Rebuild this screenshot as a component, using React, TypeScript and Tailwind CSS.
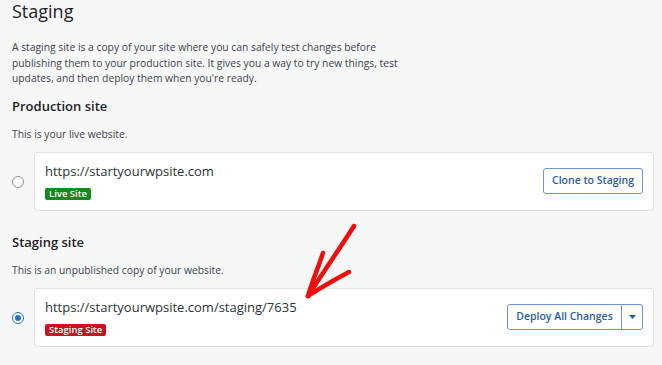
import React from 'react';

export default function App() {
    return (
        <div className="relative w-[662px] h-[365px] overflow-hidden bg-[#f6f7f7] text-[#2c3338]" style={{ fontFamily: '"Open Sans", sans-serif' }}>
            <div className="pl-3 pr-2">
                <h1 className="text-[18px] leading-[22px] text-[#1d2327]">Staging</h1>

                <p className="mt-[18px] w-[400px] text-[10.3px] leading-[15.5px] text-[#3c434a]">
                    A staging site is a copy of your site where you can safely test changes before publishing them to your production site. It gives you a way to try new things, test updates, and then deploy them when you're ready.
                </p>

                {/* Production */}
                <h2 className="mt-[10px] text-[13px] leading-[18px] font-semibold text-[#1d2327]">Production site</h2>
                <p className="mt-[11px] text-[10.3px] leading-[16px] text-[#3c434a]">This is your live website.</p>

                <div className="mt-[10px] flex items-center">
                    <span className="mt-[2px] w-[12px] h-[12px] rounded-full border border-[#8c8f94] bg-white shrink-0" />
                    <div className="ml-[10px] w-[620px] h-[59px] bg-white border border-[#e2e2e2] rounded-[3px] flex items-center justify-between pl-[10px] pr-[10px]">
                        <div>
                            <div className="text-[13px] leading-[17px] text-[#2c3338]">https://startyourwpsite.com</div>
                            <span className="mt-[8px] block w-fit bg-[#138a1e] text-white text-[9.5px] leading-[12px] font-semibold px-[4px] rounded-[2px]">Live Site</span>
                        </div>
                        <button className="h-[26px] w-[100px] border border-[#6f95cc] rounded-[3px] bg-white text-[10.5px] font-semibold text-[#2a5ea8]">Clone to Staging</button>
                    </div>
                </div>

                {/* Staging */}
                <h2 className="mt-[22px] text-[13px] leading-[18px] font-semibold text-[#1d2327]">Staging site</h2>
                <p className="mt-[11px] text-[10.3px] leading-[16px] text-[#3c434a]">This is an unpublished copy of your website.</p>

                <div className="mt-[10px] flex items-center">
                    <span className="mt-[2px] w-[12px] h-[12px] rounded-full border border-[#2a6fc9] bg-white shrink-0 flex items-center justify-center">
                        <span className="w-[6px] h-[6px] rounded-full bg-[#2a6fc9]" />
                    </span>
                    <div className="ml-[10px] w-[620px] h-[59px] bg-white border border-[#e2e2e2] rounded-[3px] flex items-center justify-between pl-[10px] pr-[10px]">
                        <div>
                            <div className="text-[13px] leading-[17px] text-[#2c3338]">https://startyourwpsite.com/staging/7635</div>
                            <span className="mt-[8px] block w-fit bg-[#cc1020] text-white text-[9.5px] leading-[12px] font-semibold px-[4px] rounded-[2px]">Staging Site</span>
                        </div>
                        <div className="flex h-[26px] border border-[#6f95cc] rounded-[3px] bg-white">
                            <button className="w-[114px] text-[10.5px] font-semibold text-[#2a5ea8] border-r border-[#6f95cc]">Deploy All Changes</button>
                            <button className="w-[20px] flex items-center justify-center">
                                <svg width="7" height="4" viewBox="0 0 7 4"><path d="M0 0h7L3.5 4z" fill="#2a5ea8" /></svg>
                            </button>
                        </div>
                    </div>
                </div>
            </div>

            {/* hand-drawn arrow */}
            <svg className="absolute left-0 top-0 pointer-events-none" width="662" height="365" viewBox="0 0 662 365">
                <g fill="none" stroke="#f20d0d" strokeWidth="4.5" strokeLinecap="round" strokeLinejoin="round">
                    <path d="M354 226 C344 242 330 262 308 296" />
                    <path d="M323 253 C318 268 312 282 308 296" />
                    <path d="M349 272 C336 279 320 288 308 296" />
                </g>
            </svg>
        </div>
    );
}
